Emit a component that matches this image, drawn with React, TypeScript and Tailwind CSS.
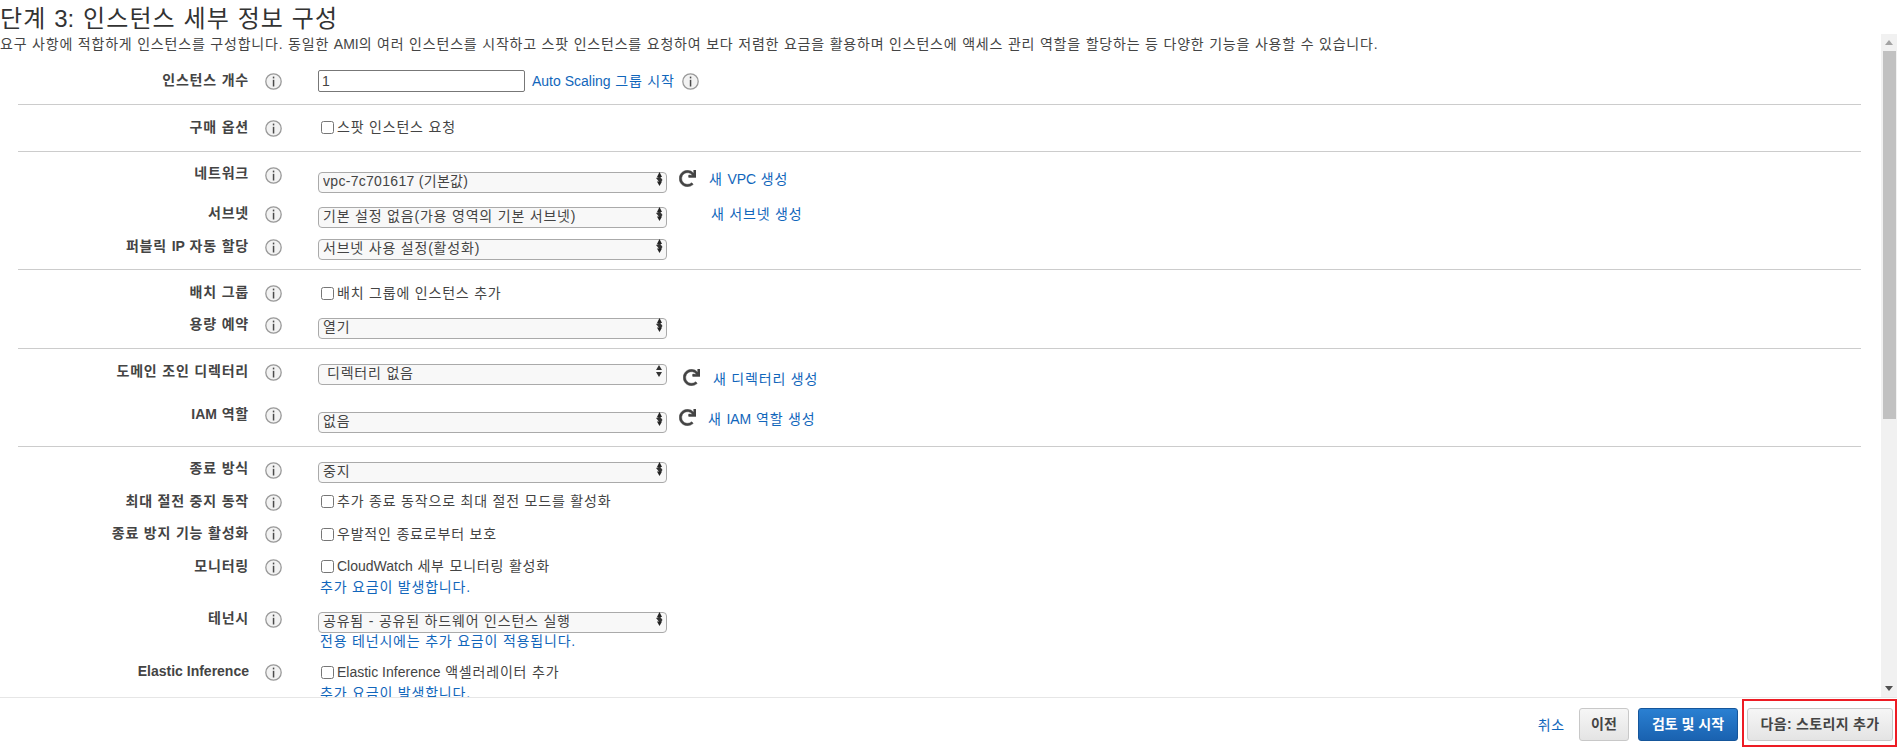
import React from "react";
import { FaRedo } from "react-icons/fa";

const FONT = "font-['Liberation_Sans','Noto_Sans_CJK_KR',sans-serif]";

function T({ text }: { text: string }) {
  const parts = text.split(/([A-Za-z0-9-]+(?: [A-Za-z0-9-]+)*)/);
  return (
    <>
      {parts.map((p, i) =>
        i % 2 === 1 ? (
          <span key={i} className="tracking-normal">{p}</span>
        ) : (
          <React.Fragment key={i}>{p}</React.Fragment>
        )
      )}
    </>
  );
}

function Info({ cls = "" }: { cls?: string }) {
  return (
    <svg width="17" height="17" viewBox="0 0 17 17" className={`shrink-0 ${cls}`}>
      <circle cx="8.5" cy="8.5" r="7.7" fill="#f2f2f2" stroke="#999999" strokeWidth="1.3" />
      <rect x="7.8" y="6.8" width="1.5" height="6.7" fill="#4a4a4a" />
      <rect x="7.8" y="3.6" width="1.5" height="1.8" fill="#4a4a4a" />
    </svg>
  );
}

function Arrows({ dark = true }: { dark?: boolean }) {
  return (
    <svg width="10" height="16" viewBox="0 0 10 16" className="absolute right-[3px] top-[2px] pointer-events-none">
      {dark ? (
        <>
          <path d="M5.5 1 L8 6 L3 6 Z" fill="#222" />
          <path d="M2 7 L6 5.5 L8.5 9 L6 12 Z" fill="#333" />
          <path d="M5.5 15 L3 10.5 L8 10.5 Z" fill="#222" />
        </>
      ) : (
        <>
          <path d="M5 2 L8 7 L2 7 Z" fill="#333" />
          <path d="M5 14 L2 9 L8 9 Z" fill="#333" />
        </>
      )}
    </svg>
  );
}

function Select({
  value,
  cls = "",
  plain = false,
  textCls = "pl-[4px]",
  track = "tracking-[0.8px]",
}: {
  value: string;
  cls?: string;
  plain?: boolean;
  textCls?: string;
  track?: string;
}) {
  return (
    <div className={`relative w-[349px] h-[21px] shrink-0 ${cls}`}>
      <select
        defaultValue={value}
        className={`w-full h-full appearance-none bg-[#f8f8f8] border border-[#aaaaaa] rounded-[4px] text-[14px] leading-[17px] pb-[2px] text-[#444] ${FONT} ${textCls} ${track}`}
      >
        <option>{value}</option>
      </select>
      <Arrows dark={!plain} />
    </div>
  );
}

function Check({ text, cls = "" }: { text: string; cls?: string }) {
  return (
    <label className={`flex items-center h-[16px] text-[14px] tracking-[0.8px] text-[#444] ml-[3px] ${cls}`}>
      <input type="checkbox" className="w-[13px] h-[13px] m-0 mr-[3px] shrink-0" />
      <span className="whitespace-nowrap"><T text={text} /></span>
    </label>
  );
}

function Link({ text, cls = "" }: { text: string; cls?: string }) {
  return (
    <a className={`text-[#1166bb] text-[14px] tracking-[0.8px] leading-[18px] whitespace-nowrap ${cls}`}>
      <T text={text} />
    </a>
  );
}

function Row({
  h,
  label,
  labelTop,
  iconTop,
  children,
}: {
  h: string;
  label: string;
  labelTop: string;
  iconTop: string;
  children: React.ReactNode;
}) {
  return (
    <div className={`flex items-start ${h}`}>
      <div className={`w-[249px] shrink-0 text-right text-[14px] tracking-[0.8px] leading-[18px] font-bold text-[#444] whitespace-nowrap ${labelTop}`}>
        <T text={label} />
      </div>
      <Info cls={`ml-[16px] ${iconTop}`} />
      <div className="ml-[36px] flex-1 min-w-0">{children}</div>
    </div>
  );
}

function Divider() {
  return <div className="h-px bg-[#cccccc] ml-[18px] mr-[20px]" />;
}

function Redo({ cls = "" }: { cls?: string }) {
  return <FaRedo strokeWidth={14} className={`text-[#444] w-[17px] h-[17px] shrink-0 ${cls}`} />;
}

export default function App() {
  return (
    <div className={`w-[1897px] h-[752px] flex flex-col bg-white overflow-hidden ${FONT}`}>
      <div className="h-[697px] flex min-h-0">
        <div className="flex-1 min-w-0 overflow-hidden">
          <h1 className="text-[24px] tracking-[1.1px] leading-[30px] pt-[4px] h-[35px] text-[#333] font-normal whitespace-nowrap">
            <T text="단계 3: 인스턴스 세부 정보 구성" />
          </h1>
          <p className="text-[14px] tracking-[0.8px] leading-[18px] h-[27px] text-[#444] whitespace-nowrap">
            <T text="요구 사항에 적합하게 인스턴스를 구성합니다. 동일한 AMI의 여러 인스턴스를 시작하고 스팟 인스턴스를 요청하여 보다 저렴한 요금을 활용하며 인스턴스에 액세스 관리 역할을 할당하는 등 다양한 기능을 사용할 수 있습니다." />
          </p>

          <Row h="h-[42px]" label="인스턴스 개수" labelTop="mt-[9px]" iconTop="mt-[11px]">
            <div className="flex items-center mt-[8px]">
              <input
                defaultValue="1"
                className="w-[207px] h-[22px] border border-[#777] rounded-[2px] px-[3px] text-[14px] text-[#444]"
              />
              <Link text="Auto Scaling 그룹 시작" cls="ml-[7px]" />
              <Info cls="ml-[7px]" />
            </div>
          </Row>
          <Divider />
          <Row h="h-[46px]" label="구매 옵션" labelTop="mt-[13px]" iconTop="mt-[15px]">
            <Check text="스팟 인스턴스 요청" cls="mt-[14px]" />
          </Row>
          <Divider />
          <Row h="h-[43px]" label="네트워크" labelTop="mt-[12px]" iconTop="mt-[15px]">
            <div className="flex items-start mt-[17px]">
              <Select value="vpc-7c701617 (기본값)" track="tracking-[0.3px]" />
              <Redo cls="ml-[12px] mt-[1px]" />
              <Link text="새 VPC 생성" cls="ml-[13px] mt-[1px]" />
            </div>
          </Row>
          <Row h="h-[36px]" label="서브넷" labelTop="mt-[9px]" iconTop="mt-[11px]">
            <div className="flex items-start mt-[9px]">
              <Select value="기본 설정 없음(가용 영역의 기본 서브넷)" />
              <Link text="새 서브넷 생성" cls="ml-[44px] mt-[1px]" />
            </div>
          </Row>
          <Row h="h-[38px]" label="퍼블릭 IP 자동 할당" labelTop="mt-[6px]" iconTop="mt-[8px]">
            <Select value="서브넷 사용 설정(활성화)" cls="mt-[5px]" />
          </Row>
          <Divider />
          <Row h="h-[40px]" label="배치 그룹" labelTop="mt-[13px]" iconTop="mt-[15px]">
            <Check text="배치 그룹에 인스턴스 추가" cls="mt-[15px]" />
          </Row>
          <Row h="h-[38px]" label="용량 예약" labelTop="mt-[5px]" iconTop="mt-[7px]">
            <Select value="열기" cls="mt-[5px]" />
          </Row>
          <Divider />
          <Row h="h-[51px]" label="도메인 조인 디렉터리" labelTop="mt-[13px]" iconTop="mt-[15px]">
            <div className="flex items-start mt-[12px]">
              <Select value="디렉터리 없음" plain textCls="pl-[8px]" />
              <Redo cls="ml-[16px] mt-[8px]" />
              <Link text="새 디렉터리 생성" cls="ml-[13px] mt-[9px]" />
            </div>
          </Row>
          <Row h="h-[46px]" label="IAM 역할" labelTop="mt-[5px]" iconTop="mt-[7px]">
            <div className="flex items-start mt-[9px]">
              <Select value="없음" />
              <Redo cls="ml-[12px]" />
              <Link text="새 IAM 역할 생성" cls="ml-[12px] mt-[1px]" />
            </div>
          </Row>
          <Divider />
          <Row h="h-[43px]" label="종료 방식" labelTop="mt-[12px]" iconTop="mt-[15px]">
            <Select value="중지" cls="mt-[12px]" />
          </Row>
          <Row h="h-[30px]" label="최대 절전 중지 동작" labelTop="mt-[2px]" iconTop="mt-[4px]">
            <Check text="추가 종료 동작으로 최대 절전 모드를 활성화" cls="mt-[3px]" />
          </Row>
          <Row h="h-[32px]" label="종료 방지 기능 활성화" labelTop="mt-[4px]" iconTop="mt-[6px]">
            <Check text="우발적인 종료로부터 보호" cls="mt-[6px]" />
          </Row>
          <Row h="h-[48px]" label="모니터링" labelTop="mt-[5px]" iconTop="mt-[7px]">
            <Check text="CloudWatch 세부 모니터링 활성화" cls="mt-[6px]" />
            <div className="ml-[2px] mt-[4px]"><Link text="추가 요금이 발생합니다." cls="block" /></div>
          </Row>
          <Row h="h-[55px]" label="테넌시" labelTop="mt-[9px]" iconTop="mt-[11px]">
            <Select value="공유됨 - 공유된 하드웨어 인스턴스 실행" cls="mt-[9px]" />
            <div className="ml-[2px] mt-[2px]"><Link text="전용 테넌시에는 추가 요금이 적용됩니다." cls="block" /></div>
          </Row>
          <Row h="h-[42px]" label="Elastic Inference" labelTop="mt-[7px]" iconTop="mt-[9px]">
            <Check text="Elastic Inference 액셀러레이터 추가" cls="mt-[9px]" />
            <div className="ml-[2px] mt-[4px]"><Link text="추가 요금이 발생합니다." cls="block" /></div>
          </Row>
        </div>

        <div className="w-[16px] shrink-0 mt-[34px] bg-[#f1f1f1] flex flex-col">
          <div className="h-[17px] flex items-center justify-center">
            <svg width="8" height="5" viewBox="0 0 8 5"><path d="M4 0 L8 5 L0 5 Z" fill="#a3a3a3" /></svg>
          </div>
          <div className="h-[368px] ml-[2px] mr-px bg-[#c1c1c1]" />
          <div className="flex-1" />
          <div className="h-[17px] flex items-center justify-center">
            <svg width="8" height="5" viewBox="0 0 8 5"><path d="M0 0 L8 0 L4 5 Z" fill="#505050" /></svg>
          </div>
        </div>
      </div>

      <div className="h-[55px] border-t border-[#e6e6e6] flex items-start justify-end">
        <Link text="취소" cls="mt-[18px] mr-[14px]" />
        <button className="w-[50px] h-[33px] mt-[10px] mr-[9px] rounded-[3px] border border-[#c8c8c8] bg-gradient-to-b from-[#f6f6f6] to-[#e4e4e4] text-[14px] font-bold text-[#444]">
          이전
        </button>
        <button className="w-[100px] h-[33px] mt-[10px] mr-[4px] rounded-[3px] border border-[#15569b] bg-gradient-to-b from-[#2a80d2] to-[#1a62b0] text-[14px] font-bold text-white">
          검토 및 시작
        </button>
        <div className="w-[155px] h-[48px] mt-[1px] border-2 border-[#ed1c24] pl-[3px] pt-[7px]">
          <button className="w-[146px] h-[33px] rounded-[3px] border border-[#c8c8c8] bg-gradient-to-b from-[#f6f6f6] to-[#e4e4e4] text-[14px] tracking-[0.3px] font-bold text-[#444] block">
            다음: 스토리지 추가
          </button>
        </div>
      </div>
    </div>
  );
}
